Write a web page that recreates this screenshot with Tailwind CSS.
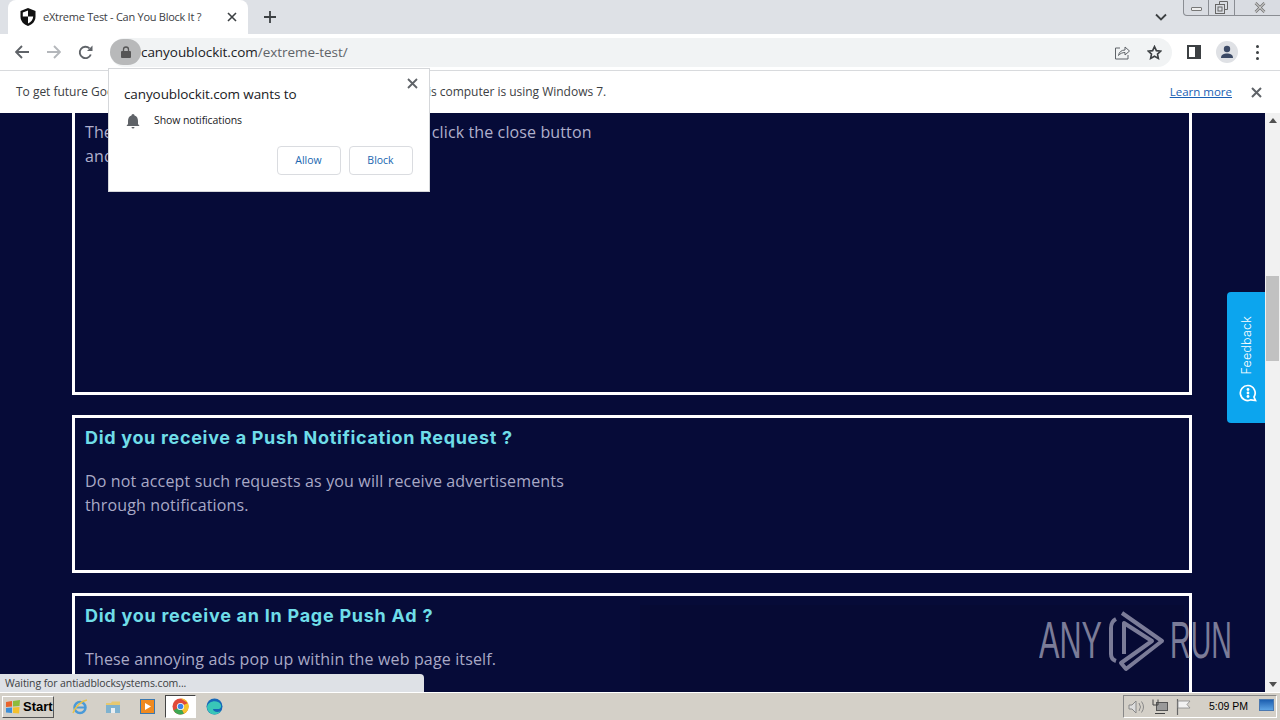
<!DOCTYPE html>
<html lang="en">
<head>
  <meta charset="UTF-8">
  <title>eXtreme Test - Can You Block It ?</title>
  <script src="https://cdn.jsdelivr.net/npm/@tailwindcss/browser@4"></script>
</head>
<body class="relative w-[1280px] h-[720px] overflow-hidden flex flex-col bg-white font-['Open_Sans',sans-serif]">

  <!-- Tab strip -->
  <div class="h-[34px] bg-[#dee1e6] flex items-end relative shrink-0">
    <div class="ml-2 w-[240px] h-[34px] bg-white rounded-t-lg flex items-center pl-[12px] pr-[11px]">
      <svg class="w-[16px] h-[18px]" viewBox="0 0 16 18"><path d="M8 0 L15.5 3 V8.500 C15.500 13 12.500 16.500 8 18 C3.500 16.500 .5 13 .5 8.500 V3 Z" fill="#111"/><path d="M8 2.500 V8.500 H2.800 V4.500 Z M8 8.500 H13.200 C13 11.800 11 14.300 8 15.500 Z" fill="#fff"/></svg>
      <span class="ml-[7px] text-[11px] tracking-[-0.27px] text-[#3c4043] whitespace-nowrap">eXtreme Test - Can You Block It ?</span>
      <svg class="ml-auto w-[10px] h-[10px]" viewBox="0 0 10 10"><path d="M1 1 L9 9 M9 1 L1 9" stroke="#3c4043" stroke-width="1.600"/></svg>
    </div>
    <svg class="ml-[16px] mb-[11px] w-[12px] h-[12px]" viewBox="0 0 12 12"><path d="M6 0 V12 M0 6 H12" stroke="#3c4043" stroke-width="1.800"/></svg>
    <svg class="absolute left-[1155px] top-[13px] w-[12px] h-[8px]" viewBox="0 0 12 8"><path d="M1 1.500 L6 6.500 L11 1.500" fill="none" stroke="#3c4043" stroke-width="1.800"/></svg>
    <!-- Window buttons -->
    <div class="absolute left-[1183px] top-0 w-[102px] h-[16px] flex border border-t-0 border-[#8a8d93] rounded-b-[4px] bg-[#d9dce2]">
      <div class="w-[25px] border-r border-[#8a8d93] flex items-center justify-center"><div class="w-[11px] h-[4px] border border-[#777] bg-[#eee] rounded-[1px] mt-[3px]"></div></div>
      <div class="w-[26px] border-r border-[#8a8d93] flex items-center justify-center">
        <svg class="w-[13px] h-[13px]" viewBox="0 0 13 13"><path d="M4.500 3.500 V.5 H12.500 V8.500 H9.500" fill="none" stroke="#666"/><rect x=".5" y="3.500" width="9" height="9" fill="none" stroke="#666"/><rect x="3" y="6" width="4" height="4" fill="none" stroke="#666"/></svg>
      </div>
      <div class="flex-1 flex items-center justify-center">
        <svg class="w-[12px] h-[11px]" viewBox="0 0 12 11"><path d="M1.500 1 L10.500 10 M10.500 1 L1.500 10" stroke="#777" stroke-width="2.600"/><path d="M1.500 1 L10.500 10 M10.500 1 L1.500 10" stroke="#eee" stroke-width="1"/></svg>
      </div>
    </div>
  </div>

  <!-- Toolbar -->
  <div class="h-[37px] bg-white border-b border-[#d8dadd] flex items-center shrink-0">
    <svg class="ml-[15px] w-[14px] h-[14px]" viewBox="0 0 14 14"><path d="M7 1 L1 7 L7 13 M1 7 H14" fill="none" stroke="#5f6368" stroke-width="1.900"/></svg>
    <svg class="ml-[18px] w-[14px] h-[14px]" viewBox="0 0 14 14"><path d="M7 1 L13 7 L7 13 M13 7 H0" fill="none" stroke="#b4b7bb" stroke-width="1.900"/></svg>
    <svg class="ml-[17px] w-[15px] h-[15px]" viewBox="0 0 15 15"><path d="M12.800 9.500 A5.700 5.700 0 1 1 11.500 3.400" fill="none" stroke="#5f6368" stroke-width="1.900"/><path d="M9 6 H14.500 V.5 Z" fill="#5f6368"/></svg>
    <div class="ml-[17px] w-[1062px] h-[29px] bg-[#f1f3f4] rounded-full flex items-center relative">
      <div class="w-[31px] h-[26px] ml-0 rounded-full bg-[#b8b9ba] flex items-center justify-center">
        <svg class="w-[10px] h-[12px]" viewBox="0 0 10 12"><path d="M2.500 5 V3.500 A2.500 2.500 0 0 1 7.500 3.500 V5" fill="none" stroke="#555" stroke-width="1.300"/><rect y="5" width="10" height="7" rx="1" fill="#555"/></svg>
      </div>
      <span class="text-[13.500px] text-[#202124] tracking-[-0.05px]">canyoublockit.com<span class="text-[#5f6368]">/extreme-test/</span></span>
      <svg class="absolute left-[1005px] top-[7px] w-[15px] h-[15px]" viewBox="0 0 15 15"><path d="M5 3 H.5 V14 H13 V10" fill="none" stroke="#5f6368"/><path d="M3.500 10.500 C4 7 6.500 5 10 5 V2 L14.500 6 L10 10 V7.500 C7.500 7.500 5 8.500 3.500 10.500 Z" fill="none" stroke="#5f6368"/></svg>
      <svg class="absolute left-[1037px] top-[7px] w-[15px] h-[15px]" viewBox="0 0 24 24"><path d="M12 2.500 L15 9 L22 9.800 L16.800 14.500 L18.200 21.500 L12 18 L5.800 21.500 L7.200 14.500 L2 9.800 L9 9 Z" fill="none" stroke="#3c4043" stroke-width="2.600"/></svg>
    </div>
    <div class="ml-[15px] w-[14px] h-[14px] border-[2px] border-[#3c4043] border-r-[6px]"></div>
    <div class="ml-[15px] w-[22px] h-[22px] rounded-full bg-[#dfe1e5] flex items-center justify-center">
      <svg class="w-[14px] h-[14px]" viewBox="0 0 14 14"><circle cx="7" cy="4" r="3.200" fill="#3c4a66"/><path d="M1 13 C1 9.500 4 8.500 7 8.500 C10 8.500 13 9.500 13 13 Z" fill="#3c4a66"/></svg>
    </div>
    <div class="ml-[18px] flex flex-col gap-[3px]">
      <div class="w-[3px] h-[3px] rounded-full bg-[#3c4043]"></div>
      <div class="w-[3px] h-[3px] rounded-full bg-[#3c4043]"></div>
      <div class="w-[3px] h-[3px] rounded-full bg-[#3c4043]"></div>
    </div>
  </div>

  <!-- Infobar -->
  <div class="h-[42px] bg-white flex items-center pl-[16px] pr-[18px] text-[12px] text-[#3c4043] shrink-0">
    <span class="whitespace-nowrap tracking-[-0.02px]">To get future Google Chrome updates, you'll need Windows 10 or later. This computer is using Windows 7.</span>
    <a class="ml-auto text-[#1a5fb4] underline text-[11.500px]">Learn more</a>
    <svg class="ml-[19px] w-[11px] h-[11px]" viewBox="0 0 11 11"><path d="M1 1 L10 10 M10 1 L1 10" stroke="#5f6368" stroke-width="2"/></svg>
  </div>

  <!-- Page -->
  <div class="flex-1 flex bg-[#060b38] overflow-hidden min-h-0">
    <div class="flex-1 pl-[72px] pr-[73px] flex flex-col gap-[20px]">
      <div class="h-[282px] shrink-0 border-[3px] border-t-0 border-white pl-[10px] pt-[7px] text-[16px] leading-[24px] text-[#b0b0cc] tracking-[0.12px]">
        <p class="whitespace-nowrap">There are ads that pop up above the content, click the close button</p>
        <p>and</p>
      </div>
      <div class="h-[158px] shrink-0 border-[3px] border-white pl-[10px] pt-[8px]">
        <h2 class="font-['Inter',sans-serif] font-bold text-[18px] leading-[24px] tracking-[0.68px] text-[#6fdde8] whitespace-nowrap">Did you receive a Push Notification Request ?</h2>
        <p class="mt-[19px] text-[16px] leading-[24px] text-[#a9a9c6] tracking-[0.15px]">Do not accept such requests as you will receive advertisements<br>through notifications.</p>
      </div>
      <div class="h-[158px] shrink-0 border-[3px] border-white pl-[10px] pt-[8px] relative">
        <h2 class="font-['Inter',sans-serif] font-bold text-[18px] leading-[24px] tracking-[0.74px] text-[#6fdde8] whitespace-nowrap">Did you receive an In Page Push Ad ?</h2>
        <p class="mt-[19px] text-[16px] leading-[24px] text-[#a9a9c6] tracking-[0.15px]">These annoying ads pop up within the web page itself.</p>
        <div class="absolute left-[565px] top-[9px] right-[5px] h-[120px] bg-[#060a34]"></div>
      </div>
    </div>
    <!-- Scrollbar -->
    <div class="w-[15px] bg-[#f1f1f1] flex flex-col items-center relative">
      <svg class="mt-[5px] w-[8px] h-[5px]" viewBox="0 0 8 5"><path d="M0 5 L4 0 L8 5 Z" fill="#505050"/></svg>
      <div class="absolute top-[163px] left-[1px] w-[13px] h-[85px] bg-[#c1c1c1]"></div>
      <svg class="mt-auto mb-[5px] w-[8px] h-[5px]" viewBox="0 0 8 5"><path d="M0 0 L4 5 L8 0 Z" fill="#505050"/></svg>
    </div>
  </div>

  <!-- Taskbar -->
  <div class="h-[28px] bg-[#d4d0c8] border-t border-white flex items-center shrink-0">
    <div class="ml-[2px] w-[52px] h-[22px] border border-t-white border-l-white border-r-[#555] border-b-[#555] flex items-center pl-[2px] gap-[2px]">
      <svg class="w-[16px] h-[16px]" viewBox="0 0 16 16"><path d="M1 3 L7 2 L7 7.500 L1 8 Z" fill="#e8642c"/><path d="M8 2 L15 1 L14.500 7 L8 7.500 Z" fill="#8cbb3c"/><path d="M1 9 L7 8.500 L7 14 L1 13.500 Z" fill="#3c8ed8"/><path d="M8 8.500 L14.500 8 L14 14.500 L8 14 Z" fill="#f4c02c"/></svg>
      <span class="font-['Liberation_Sans',sans-serif] font-bold text-[13px] text-black">Start</span>
    </div>
    <svg class="ml-[17px] w-[18px] h-[18px]" viewBox="0 0 18 18"><circle cx="9" cy="9.500" r="5.500" fill="none" stroke="#4a9ad8" stroke-width="2.500"/><path d="M4 9.500 H14" stroke="#4a9ad8" stroke-width="2"/><path d="M2 15 C4 9 10 3 16 2" fill="none" stroke="#e8c24a" stroke-width="1.500"/></svg>
    <svg class="ml-[16px] w-[16px] h-[16px]" viewBox="0 0 16 16"><path d="M1 4 H6 L7 2.500 H15 V14 H1 Z" fill="#e6c870"/><rect x="1" y="6" width="14" height="8" fill="#7fb2cf"/><rect x="6" y="9" width="4" height="5" fill="#e8eef2"/></svg>
    <div class="ml-[19px] w-[15px] h-[15px] border border-[#3a78b0] bg-[#f08a20] flex items-center justify-center">
      <svg class="w-[9px] h-[9px]" viewBox="0 0 9 9"><path d="M2 1 L8 4.500 L2 8 Z" fill="#fff"/></svg>
    </div>
    <div class="ml-[10px] w-[31px] h-[23px] bg-white border border-t-[#444] border-l-[#444] border-r-white border-b-white flex items-center justify-center">
      <svg class="w-[17px] h-[17px]" viewBox="0 0 17 17"><circle cx="8.500" cy="8.500" r="8" fill="#e04a3a"/><path d="M8.500 8.500 L1.600 12.500 A8 8 0 0 0 12 15.700 Z" fill="#3da852"/><path d="M8.500 .5 A8 8 0 0 1 16 5 L8.500 8.500 L12 15.700 A8 8 0 0 0 16 5 Z" fill="#f6c42c"/><circle cx="8.500" cy="8.500" r="3.600" fill="#fff"/><circle cx="8.500" cy="8.500" r="2.800" fill="#3f83e8"/></svg>
    </div>
    <svg class="ml-[10px] w-[17px] h-[17px]" viewBox="0 0 17 17"><circle cx="8.500" cy="8.500" r="8" fill="#1668b8"/><path d="M1 9 C2 4 8 2 12 4 C16 6 16 10 13 11 H7 C7 13.500 11 15 15 13 C13 16 9 17 6 16 C3 15 1 12 1 9 Z" fill="#39c6b8"/></svg>

    <div class="ml-auto mr-[3px] w-[154px] h-[23px] border border-t-[#888] border-l-[#888] border-r-white border-b-white flex items-center relative text-[#000]">
      <svg class="ml-[4px] w-[17px] h-[14px]" viewBox="0 0 17 14"><path d="M1 5 H4 L8 1 V13 L4 9 H1 Z" fill="#ddd" stroke="#888"/><path d="M11 3 Q14 7 11 11 M13.500 1.500 Q17.500 7 13.500 12.500" fill="none" stroke="#888"/></svg>
      <svg class="ml-[7px] w-[16px] h-[15px]" viewBox="0 0 16 15"><rect x="4.500" y="3.500" width="11" height="8" fill="#999" stroke="#555"/><path d="M3 14.500 H13 M1 .5 V6 H6 V.5" fill="none" stroke="#444"/></svg>
      <svg class="ml-[7px] w-[16px] h-[16px]" viewBox="0 0 16 16"><path d="M2.500 0 V16" stroke="#666" stroke-width="1.200"/><path d="M3 2 H15 L12 5.500 L15 9 H3 Z" fill="#f2f2f2" stroke="#888" stroke-width=".8"/></svg>
      <span class="ml-[18px] font-['Liberation_Sans',sans-serif] text-[10.500px] whitespace-nowrap">5:09 PM</span>
      <div class="absolute right-[2px] top-[3px] w-[15px] h-[12px] bg-gradient-to-b from-[#1c5fb0] to-[#5ea4e4] border border-[#4a78b0]"></div>
    </div>
  </div>

  <!-- Permission bubble -->
  <div class="absolute left-[108px] top-[68px] w-[322px] h-[124px] bg-white border border-[#d5d7da] pl-[15px] pr-[16px]">
    <svg class="absolute right-[11px] top-[9px] w-[11px] h-[11px]" viewBox="0 0 11 11"><path d="M1 1 L10 10 M10 1 L1 10" stroke="#5f6368" stroke-width="1.800"/></svg>
    <div class="mt-[15px] text-[13.500px] leading-[20px] text-[#202124] tracking-[-0.1px]">canyoublockit.com wants to</div>
    <div class="mt-[7px] flex items-center h-[20px]">
      <svg class="ml-[2px] w-[14px] h-[15px]" viewBox="0 0 14 15"><path d="M7 0 C8 0 8.500 .8 8.500 1.500 C11 2.200 12 4.500 12 7 V10 L13.500 12 H.5 L2 10 V7 C2 4.500 3 2.200 5.500 1.500 C5.500 .8 6 0 7 0 Z" fill="#5f6368"/><path d="M5.500 13 H8.500 A1.500 1.500 0 0 1 5.500 13 Z" fill="#5f6368"/></svg>
      <span class="ml-[14px] text-[10.500px] text-[#202124] tracking-[-0.1px]">Show notifications</span>
    </div>
    <div class="mt-[15px] flex justify-end gap-[8px]">
      <button class="w-[64px] h-[29px] pr-[1px] border border-[#dadce0] rounded-[4px] text-[10.500px] text-[#1a67b0]">Allow</button>
      <button class="w-[64px] h-[29px] pr-[1px] border border-[#dadce0] rounded-[4px] text-[10.500px] text-[#1a67b0]">Block</button>
    </div>
  </div>

  <!-- Status bubble -->
  <div class="absolute left-0 top-[674px] w-[424px] h-[18px] bg-[#dee1e6] rounded-tr-[4px] pl-[5px] text-[10.500px] leading-[18px] tracking-[-0.1px] text-[#3c4043] whitespace-nowrap">Waiting for antiadblocksystems.com...</div>

  <!-- Feedback tab -->
  <div class="absolute left-[1227px] top-[292px] w-[38px] h-[131px] pl-[3px] bg-[#0ca5ee] rounded-l-[4px] flex flex-col items-center justify-end pb-[21px] gap-[9px]">
    <span class="font-['Inter',sans-serif] font-light [writing-mode:vertical-rl] rotate-180 text-[12.500px] text-white tracking-[0.2px]">Feedback</span>
    <svg class="w-[18px] h-[18px]" viewBox="0 0 18 18"><path d="M9 1.500 A7.500 7.500 0 1 0 12 15.800 L16.500 16.500 L15 13 A7.500 7.500 0 0 0 9 1.500 Z" fill="none" stroke="#fff" stroke-width="1.700"/><circle cx="9" cy="5.500" r="1.400" fill="#fff"/><circle cx="9" cy="9" r="1.400" fill="#fff"/><circle cx="9" cy="12.500" r="1.400" fill="#fff"/></svg>
  </div>

  <!-- Watermark -->
  <div class="absolute left-[1039px] top-[610px] h-[62px] flex items-center text-[#7b7c98] font-['Liberation_Sans',sans-serif]">
    <span class="text-[51px] leading-[62px] scale-x-[.6] origin-left w-[68px] block">ANY</span>
    <svg class="w-[62px] h-[62px]" viewBox="0 0 62 62"><path d="M9 9 C5 11 4 14 4 18 V44 C4 48 6 50 9 51" fill="none" stroke="#7b7c98" stroke-width="4"/><path d="M15 3 L55 31 L19 59 L14 53 L45 31 L17 13 V44" fill="none" stroke="#7b7c98" stroke-width="4" stroke-linejoin="round"/></svg>
    <span class="ml-[1px] text-[51px] leading-[62px] scale-x-[.56] origin-left w-[61px] block">RUN</span>
  </div>
</body>
</html>
